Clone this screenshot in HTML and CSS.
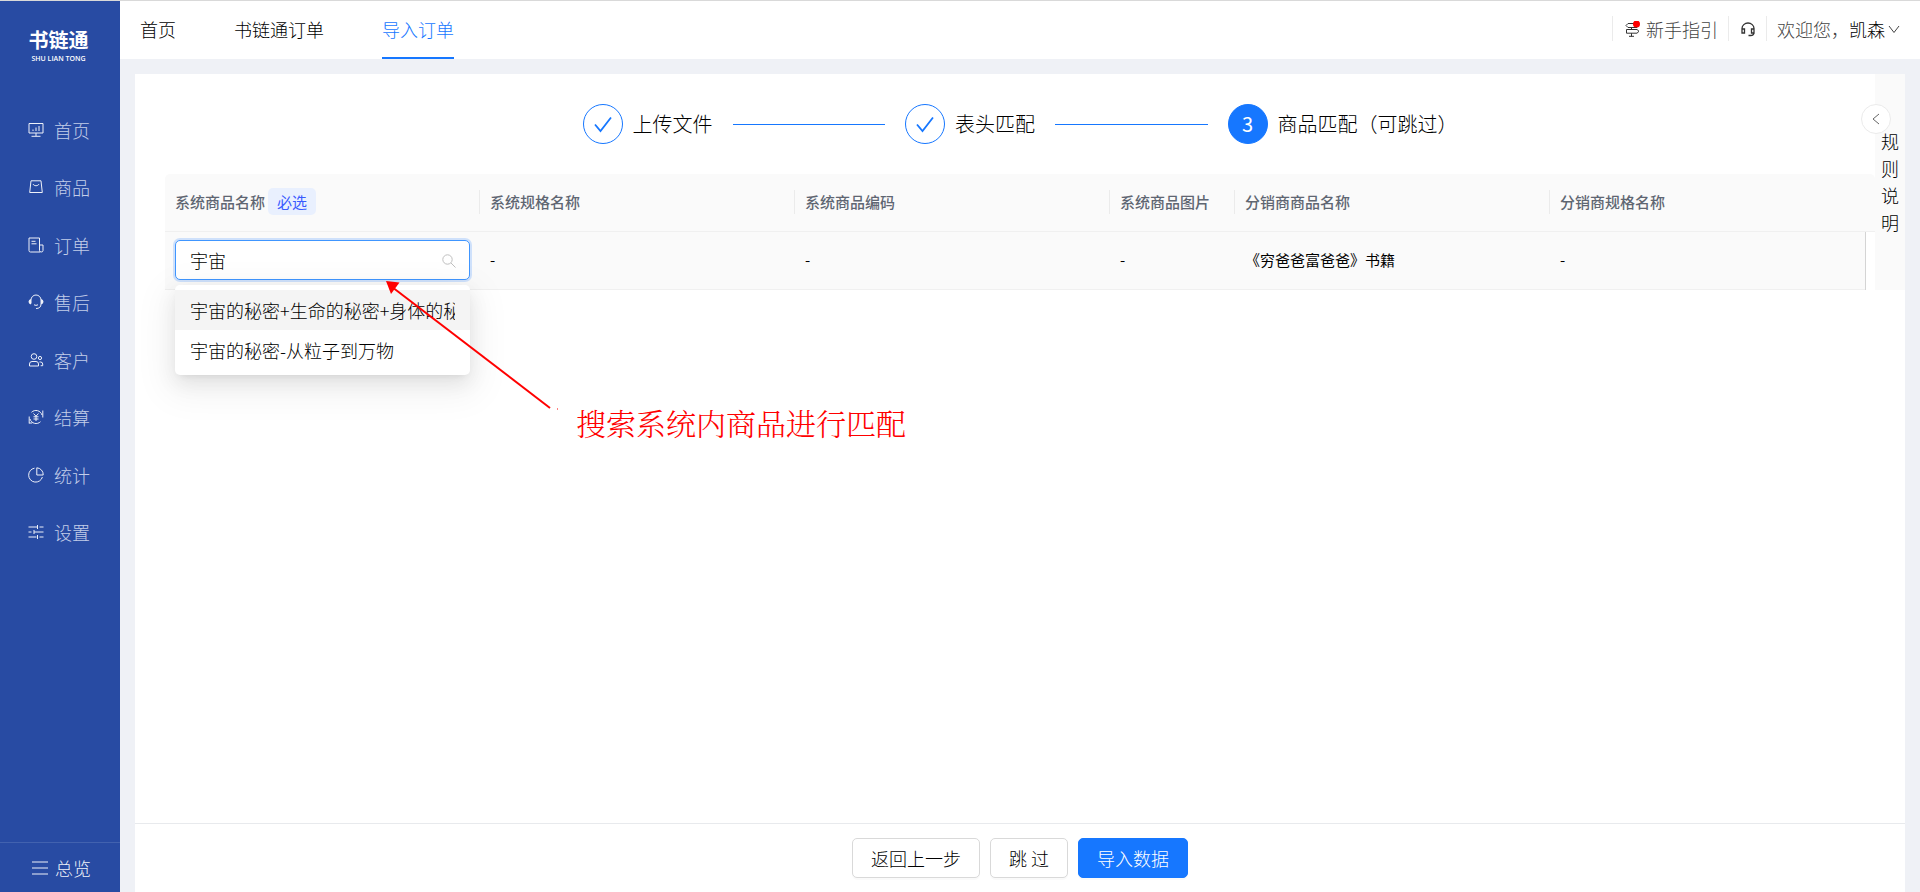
FILE: index.html
```html
<!DOCTYPE html>
<html lang="zh-CN">
<head>
<meta charset="utf-8">
<title>书链通 - 导入订单</title>
<link rel="stylesheet" href="styles.css">
</head>
<body>
<div class="app">
  <aside class="sidebar">
    <div class="logo">
      <span class="logo-name">书链通</span>
      <span class="logo-sub">SHU LIAN TONG</span>
    </div>
    <nav class="menu">
      <a class="menu-item" href="#"><svg class="icon" viewBox="0 0 16 16"><path d="M1 1.500h14v9.500H1zM8 11v3M3.500 14.300h9M5 9V7.500M8 9V5.500M11 9V4"/></svg>首页</a>
      <a class="menu-item" href="#"><svg class="icon" viewBox="0 0 16 16"><path d="M3 1.800h10L14.300 13.500H1.700zM5 5c1 2.300 5 2.300 6 0"/></svg>商品</a>
      <a class="menu-item" href="#"><svg class="icon" viewBox="0 0 16 16"><path d="M12 15H2.500Q1 15 1 13.500V1h10.500v12.500M11.500 8H15v5.500q0 1.500-1.800 1.500T11.500 13.500M3.500 4.300h4M3.500 6.800h5"/></svg>订单</a>
      <a class="menu-item" href="#"><svg class="icon" viewBox="0 0 16 16"><path d="M3 9.500V6a5 5 0 0 1 10 0v4q0 4.500-5 4.500M6 10.800q2 1.200 4 0"/><path class="solid" d="M3 5v5.500Q.5 10 .5 7.800T3 5zM13 5v5.500q2.500-.5 2.500-2.700T13 5z"/></svg>售后</a>
      <a class="menu-item" href="#"><svg class="icon" viewBox="0 0 16 16"><circle cx="6" cy="4.500" r="2.800"/><circle cx="12" cy="6" r="1.600"/><path d="M1.500 14v-2q0-2.500 2.500-2.500h4q2.500 0 2.500 2.500v2zM11.500 10h1q2.200 0 2.200 2v1.700h-2"/></svg>客户</a>
      <a class="menu-item" href="#"><svg class="icon" viewBox="0 0 16 16"><path d="M3.500 3.300A6.300 6.300 0 0 1 14 6M12.500 12.700A6.300 6.300 0 0 1 2 10M14.800 1.500v7M1.200 7.500v7M1.200 14h3M5.500 4.500 8 7.200l2.500-2.700M8 7.200V12M5.500 7.800h5M5.500 10h5"/></svg>结算</a>
      <a class="menu-item" href="#"><svg class="icon" viewBox="0 0 16 16"><path d="M6.500 1.200A7 7 0 1 0 14.400 10M8.800.8V8h6.400A6.800 6.800 0 0 0 8.800.8z"/></svg>统计</a>
      <a class="menu-item" href="#"><svg class="icon" viewBox="0 0 16 16"><path d="M.5 3h9M9.500 1v4M11.500 3h4M.5 8h3M6 6v4M6 8h9.500M.5 13h8M9.500 11v4M11.500 13h4"/></svg>设置</a>
    </nav>
    <a class="overview" href="#"><svg class="icon" viewBox="0 0 16 16"><path d="M0 2h16M0 8h16M0 14h16"/></svg>总览</a>
  </aside>

  <div class="page">
    <header class="topbar">
      <nav class="tabs">
        <a class="tab" href="#">首页</a>
        <a class="tab" href="#">书链通订单</a>
        <a class="tab tab-active" href="#" aria-current="page">导入订单</a>
      </nav>
      <div class="tools">
        <a class="tool" href="#"><svg class="icon" viewBox="0 0 16 16"><path d="M4 2.500h9v4H4L2 4.500zM7.500 6.500v2M2.500 8.500h10.500l2 1.800-2 1.900H2.500zM7.500 12.200v3.300M5 15.300h5"/><circle class="alert-dot" cx="12.500" cy="3" r="3.500"/></svg>新手指引</a>
        <a class="tool" href="#" aria-label="客服"><svg class="icon" viewBox="0 0 16 16"><path class="bold" d="M2 8V7.500a6 5.500 0 0 1 12 0v4q0 3-3.500 3M2 8h2.500v4H2zM11.500 8H14v4h-2.500zM8.500 14.500h2"/></svg></a>
        <button class="tool user" type="button"><span>欢迎您，<span class="user-name">凯森</span></span><svg class="caret" viewBox="0 0 12 12"><path d="M1 3l5 6.500L11 3"/></svg></button>
      </div>
    </header>

    <main class="card">
      <div class="body">
        <section class="content">
          <ol class="steps">
            <li class="step"><span class="step-icon"><svg viewBox="0 0 20 20"><path d="M2 10.500 7.500 17 18 3.500"/></svg></span><span class="step-title">上传文件</span></li>
            <li class="step"><span class="step-icon"><svg viewBox="0 0 20 20"><path d="M2 10.500 7.500 17 18 3.500"/></svg></span><span class="step-title">表头匹配</span></li>
            <li class="step"><span class="step-icon step-current">3</span><span class="step-title">商品匹配（可跳过）</span></li>
          </ol>
          <table class="grid">
            <colgroup><col class="wide"><col class="wide"><col class="wide"><col class="narrow"><col class="wide"><col class="wide"><col class="gutter"></colgroup>
            <thead>
              <tr>
                <th><div class="head"><label for="product">系统商品名称</label><span class="tag">必选</span></div></th>
                <th><div class="head">系统规格名称</div></th>
                <th><div class="head">系统商品编码</div></th>
                <th><div class="head">系统商品图片</div></th>
                <th><div class="head">分销商商品名称</div></th>
                <th><div class="head">分销商规格名称</div></th>
                <td class="head-gutter"></td>
              </tr>
            </thead>
            <tbody>
              <tr>
                <td>
                  <div class="select">
                    <input class="select-input" id="product" type="text" value="宇宙" role="combobox" aria-expanded="true" aria-controls="product-list">
                    <svg class="select-icon" viewBox="0 0 14 14"><circle cx="5.500" cy="5.500" r="4.700"/><path d="M9 9l4.500 4.500"/></svg>
                    <ul class="options" id="product-list" role="listbox">
                      <li class="option option-active" role="option" aria-selected="true">宇宙的秘密+生命的秘密+身体的秘</li>
                      <li class="option" role="option" aria-selected="false">宇宙的秘密-从粒子到万物</li>
                    </ul>
                    <div class="note">
                      <svg class="note-arrow" viewBox="0 0 174 130"><path class="note-line" d="M8 7.500 164 127"/><path class="note-head" d="M0 0l13.500 1.500L5 13z"/><path class="note-head" d="M171 127.500h1v1h-1z"/></svg>
                      <span class="note-text">搜索系统内商品进行匹配</span>
                    </div>
                  </div>
                </td>
                <td>-</td>
                <td>-</td>
                <td>-</td>
                <td>《穷爸爸富爸爸》书籍</td>
                <td>-</td>
                <td class="row-gutter"></td>
              </tr>
            </tbody>
          </table>
        </section>
        <aside class="rules">
          <button class="rules-toggle" type="button" aria-label="展开规则说明"><svg viewBox="0 0 12 12"><path d="M9 1 3 6l6 5"/></svg></button>
          <span class="rules-text">规则说明</span>
        </aside>
      </div>
      <footer class="actions">
        <button class="btn" type="button">返回上一步</button>
        <button class="btn" type="button">跳 过</button>
        <button class="btn btn-primary" type="button">导入数据</button>
      </footer>
    </main>
  </div>
</div>
</body>
</html>
```
FILE: styles.css
```css
* {
  box-sizing: border-box;
}

body {
  margin: 0;
  font-family: "Noto Sans CJK SC", sans-serif;
  font-size: 18px;
  font-weight: 300;
  line-height: 28px;
  color: #000;
  background: #eff1f6;
}

a {
  color: inherit;
  text-decoration: none;
}

button,
input {
  font: inherit;
  color: inherit;
}

ul,
ol {
  margin: 0;
  padding: 0;
  list-style: none;
}

svg {
  flex: none;
  fill: none;
  stroke: currentColor;
}

.icon {
  width: 16px;
  height: 16px;
}

.solid {
  fill: currentColor;
  stroke: none;
}

.bold {
  stroke-width: 1.300;
}

.app {
  display: flex;
  min-height: 100vh;
  border-top: 1px solid #d9d9d9;
}

/* Sidebar */
.sidebar {
  display: flex;
  flex: none;
  flex-direction: column;
  width: 120px;
  color: #fff;
  background: #284ba3;
}

.logo {
  display: flex;
  flex-direction: column;
  align-items: center;
  padding: 26px 3px 36px 0;
}

.logo-name {
  font-size: 20px;
  font-weight: 700;
  line-height: 26px;
}

.logo-sub {
  font-family: "Open Sans", sans-serif;
  font-size: 7px;
  font-weight: 600;
  line-height: 12px;
}

.menu {
  display: grid;
  grid-auto-rows: 1fr;
  height: 460px;
}

.menu-item,
.overview {
  display: flex;
  align-items: center;
  gap: 10px;
  padding-left: 28px;
  color: #c3cee9;
}

.menu-item .icon {
  color: #eef1f9;
}

.overview {
  gap: 7px;
  height: 50px;
  margin-top: auto;
  padding-left: 32px;
  color: #eef1f9;
  border-top: 1px solid #4262af;
}

/* Top bar */
.page {
  display: flex;
  flex: 1;
  flex-direction: column;
  min-width: 0;
}

.topbar {
  display: flex;
  justify-content: space-between;
  height: 58px;
  padding: 0 20px;
  background: #fff;
}

.tabs {
  display: flex;
  gap: 58px;
}

.tab {
  padding-top: 14px;
  border-bottom: 2px solid transparent;
}

.tab-active {
  color: #1677ff;
  border-bottom-color: #1677ff;
}

.tools {
  display: flex;
  align-items: flex-start;
  padding-top: 15px;
}

.tool {
  display: flex;
  align-items: center;
  gap: 6px;
  height: 25px;
  padding: 0 10px 0 11px;
  color: #444;
  border: 0;
  border-left: 1px solid #ebebeb;
  background: none;
}

.tool .icon {
  color: #333;
}

.tool.user {
  gap: 3px;
  padding: 0 0 0 10px;
}

.user-name {
  color: #000;
}

.caret {
  width: 12px;
  height: 12px;
}

.alert-dot {
  fill: #f00;
  stroke: none;
}

/* Card */
.card {
  display: flex;
  flex: 1;
  flex-direction: column;
  margin: 15px 15px 0;
  background: #fff;
}

.body {
  display: flex;
  flex: 1;
  align-items: flex-start;
}

.content {
  flex: 1;
  min-width: 0;
  padding: 30px 0 0 30px;
}

.steps {
  display: flex;
  max-width: 875px;
  margin: 0 auto 30px;
  font-size: 20px;
}

.step {
  display: flex;
  align-items: center;
  gap: 10px;
}

.step:not(:last-child) {
  flex: 1;
}

.step:not(:last-child)::after {
  content: "";
  flex: 1;
  height: 1px;
  margin: 0 20px 0 10px;
  background: #1677ff;
}

.step-icon {
  display: flex;
  align-items: center;
  justify-content: center;
  width: 40px;
  height: 40px;
  color: #1677ff;
  border: 1px solid #1677ff;
  border-radius: 50%;
}

.step-icon svg {
  width: 20px;
  height: 20px;
  stroke-width: 1.800;
}

.step-current {
  color: #fff;
  font-weight: 400;
  background: #1677ff;
}

/* Table */
.grid {
  width: 100%;
  table-layout: fixed;
  border-collapse: separate;
  border-spacing: 0;
  font-size: 15px;
  line-height: 24px;
}

.wide {
  width: 315px;
}

.narrow {
  width: 125px;
}

.gutter {
  width: 10px;
}

.grid th,
.grid td {
  height: 58px;
  padding: 0 0 2px 10px;
  text-align: left;
  font-weight: 400;
  border-bottom: 1px solid #f0f0f0;
  background: #fafafa;
}

.grid th {
  color: #5f6672;
  font-weight: 500;
}

.grid th:first-child {
  border-top-left-radius: 5px;
}

.grid .head-gutter,
.grid .row-gutter {
  padding: 0;
}

.grid .head-gutter {
  border-top-right-radius: 5px;
}

.grid .row-gutter {
  border-bottom: 0;
  border-left: 1px solid #d4d4d4;
  background: #fff;
}

.head {
  display: flex;
  align-items: center;
  gap: 3px;
  height: 24px;
  border-right: 1px solid #ebebeb;
}

.grid th:nth-child(6) .head {
  border-right: 0;
}

.tag {
  padding: 1px 9px;
  line-height: 25px;
  font-weight: 400;
  color: #3a5bff;
  border-radius: 5px;
  background: #e9f0fe;
}

/* Product search select */
.select {
  position: relative;
  margin-right: 10px;
  font-size: 18px;
  font-weight: 300;
}

.select-input {
  display: block;
  width: 100%;
  height: 40px;
  padding: 0 40px 0 14px;
  border: 1px solid #4096ff;
  border-radius: 5px;
  outline: 0;
  background: #fff;
  box-shadow: 0 0 0 2px #cfe1fb;
}

.select-icon {
  position: absolute;
  top: 14px;
  right: 14px;
  width: 14px;
  height: 14px;
  color: #bfbfbf;
}

.options {
  position: absolute;
  top: 45px;
  left: 0;
  right: 0;
  padding: 5px 0;
  border-radius: 5px;
  background: #fff;
  box-shadow: 0 8px 20px rgba(0, 0, 0, 0.08), 0 4px 8px -5px rgba(0, 0, 0, 0.12), 0 11px 35px 10px rgba(0, 0, 0, 0.05);
}

.option {
  margin: 0 15px;
  line-height: 40px;
  white-space: nowrap;
  overflow: hidden;
}

.option-active {
  margin: 0;
  border: solid #f4f4f4;
  border-width: 0 15px;
  background: #f4f4f4;
}

/* Callout drawn over the page */
.note {
  position: absolute;
  top: 41px;
  left: 211px;
  display: flex;
  align-items: flex-end;
  gap: 16px;
  color: #f00;
  pointer-events: none;
}

.note-arrow {
  width: 174px;
  height: 130px;
  margin-bottom: 30px;
}

.note-line {
  stroke-width: 2;
}

.note-head {
  fill: currentColor;
  stroke: none;
}

.note-text {
  font-family: "Noto Serif CJK SC", "Noto Sans CJK SC", serif;
  font-size: 30px;
  line-height: 38px;
  white-space: nowrap;
}

/* Collapsed rules panel */
.rules {
  position: relative;
  display: flex;
  justify-content: center;
  width: 30px;
  padding: 54px 5px;
  background: #fafafa;
}

.rules-toggle {
  position: absolute;
  top: 30px;
  left: -14px;
  display: flex;
  align-items: center;
  justify-content: center;
  width: 30px;
  height: 30px;
  padding: 0;
  color: #666;
  border: 1px solid #ebebeb;
  border-radius: 50%;
  background: #fff;
}

.rules-toggle svg {
  width: 12px;
  height: 12px;
}

.rules-text {
  width: 18px;
  line-height: 27px;
}

/* Footer */
.actions {
  display: flex;
  justify-content: center;
  gap: 10px;
  padding: 14px 0;
  border-top: 1px solid #e8eaed;
}

.btn {
  height: 40px;
  padding: 0 18px;
  border: 1px solid #d9d9d9;
  border-radius: 5px;
  background: #fff;
  box-shadow: 0 2px 0 rgba(0, 0, 0, 0.02);
}

.btn-primary {
  color: #fff;
  border-color: #1677ff;
  background: #1677ff;
}
```
